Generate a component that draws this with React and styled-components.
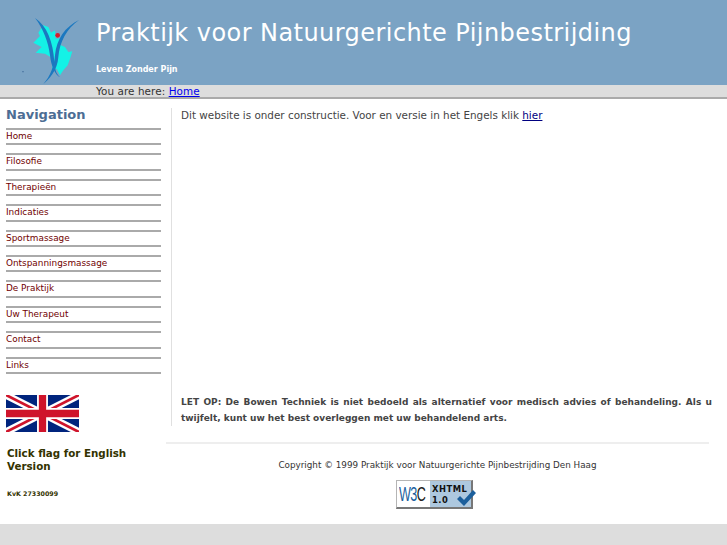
import React from "react";
import styled, { createGlobalStyle } from "styled-components";

const Global = createGlobalStyle`
  html, body { margin: 0; padding: 0; background: #dddddd; }
  body { font-family: "DejaVu Sans", sans-serif; }
`;
const Page = styled.div`width: 727px; height: 545px; display: flex; flex-direction: column; overflow: hidden;`;
const Header = styled.header`height: 85px; background: #7ba3c4; display: flex; flex: none;`;
const LogoBox = styled.div`width: 96px; flex: none; padding: 12px 0 0 15px; box-sizing: border-box;`;
const HeaderText = styled.div`color: #fff; display: flex; flex-direction: column;`;
const Title = styled.h1`margin: 17px 0 0; font-size: 24px; font-weight: 400; line-height: 32px; white-space: nowrap; letter-spacing: 0.44px;`;
const Slogan = styled.div`margin-top: 15px; font-size: 8px; font-weight: 700; line-height: 12px;`;
const Crumb = styled.div`height: 12px; background: #dddddd; border-bottom: 2px solid #aaaaaa; padding-left: 96px; font-size: 10.4px; line-height: 13px; color: #333; flex: none; white-space: nowrap; letter-spacing: .08px;`;
const CrumbLink = styled.a`color: #0000ee; text-decoration: underline;`;
const Body = styled.main`height: 425px; background: #fff; display: flex; flex: none;`;
const Side = styled.aside`width: 166px; flex: none; box-sizing: border-box; padding-left: 6px;`;
const NavTitle = styled.h2`margin: 7px 0 0; width: 155px; font-size: 13px; line-height: 17px; font-weight: 700; color: #4d6d94;`;
const NavList = styled.ul`list-style: none; margin: 5px 0 0; padding: 0; width: 155px;`;
const NavItem = styled.li`height: 13.4px; border-top: 2px solid #aaaaaa; border-bottom: 2px solid #aaaaaa; margin-bottom: 8px; font-size: 8.9px; line-height: 12.5px; color: #700000; white-space: nowrap;`;
const Flag = styled.svg`display: block; margin-top: 21px; width: 73px; height: 37px;`;
const FlagNote = styled.div`margin-top: 15px; width: 150px; font-size: 10.3px; font-weight: 700; line-height: 13px; color: #333300; padding-left: 1px;`;
const Kvk = styled.div`margin-top: 16px; font-size: 6.3px; font-weight: 700; line-height: 9px; color: #333300; padding-left: 1px;`;
const MainCol = styled.div`flex: 1; display: flex; flex-direction: column; min-width: 0;`;
const Content = styled.section`margin-left: 5px; margin-top: 9px; height: 318px; width: 531px; border-left: 1px solid #e0e0e0; padding-left: 9px; display: flex; flex-direction: column; justify-content: space-between; font-size: 10.4px; color: #444;`;
const Intro = styled.p`margin: 1px 0 0; line-height: 13px; white-space: nowrap;`;
const Notice = styled.p`margin: 0; font-size: 9px; font-weight: 700; line-height: 16px; color: #444; text-align: justify; width: 531px;`;
const HierLink = styled.a`color: #000080; text-decoration: underline;`;
const Rule = styled.hr`border: 0; height: 2px; background: #eeeeee; margin: 16px 0 0; width: 543px;`;
const Copyright = styled.div`margin-top: 15px; width: 543px; text-align: center; font-size: 8.8px; line-height: 12px; color: #333; white-space: nowrap;`;
const BadgeWrap = styled.div`width: 537px; display: flex; justify-content: center; margin-top: 9px;`;
const Badge = styled.div`position: relative; width: 77px; height: 29px; box-sizing: border-box; display: flex; background: #fff; border: 1px solid #b5b5b5; border-right: 2px solid #777; border-bottom: 2px solid #777;`;
const W3 = styled.div`width: 33px; flex: none; overflow: hidden; font: 400 21px/26px "Liberation Sans", sans-serif; color: #1a5f9e; letter-spacing: -1px; padding-left: 2px; box-sizing: border-box; white-space: nowrap;`;
const W3Text = styled.span`display: inline-block; transform: scaleX(.6); transform-origin: left center;`;
const C = styled.span`color: #222;`;
const BadgeRight = styled.div`flex: 1; background: #adc8df; font: 700 8.4px/11px "DejaVu Sans", sans-serif; letter-spacing: .5px; color: #111; padding: 3px 0 0 2px;`;
const Check = styled.svg`position: absolute; right: -5px; top: 8px; width: 20px; height: 18px;`;

const navItems = ["Home", "Filosofie", "Therapieën", "Indicaties", "Sportmassage", "Ontspanningsmassage", "De Praktijk", "Uw Therapeut", "Contact", "Links"];

export default function App() {
  return (
    <Page>
      <Global />
      <Header>
        <LogoBox>
          <svg width="70" height="73" viewBox="0 0 210 219">
            <path d="M85 40 L100 45 L108 62 L120 55 L122 80 L140 78 L138 100 L150 105 L160 120 L172 118 L165 140 L158 160 L145 175 L135 190 L125 170 L110 180 L115 140 L90 125 L62 122 L80 105 L55 92 L75 72 L70 62Z" fill="#14f2e6" />
            <path d="M60 18 C95 40 115 90 118 150 C120 170 122 185 136 196 C120 190 108 160 105 130 C100 90 85 50 60 18Z" fill="#1b78c0" />
            <path d="M192 24 C150 45 125 80 120 130 C118 160 105 195 85 216 C100 205 128 175 130 135 C134 90 155 50 192 24Z" fill="#1b78c0" />
            <circle cx="128" cy="70" r="7" fill="#d81f2a" />
            <circle cx="24" cy="179" r="1.8" fill="#2c5a8c" />
          </svg>
        </LogoBox>
        <HeaderText>
          <Title>Praktijk voor Natuurgerichte Pijnbestrijding</Title>
          <Slogan>Leven Zonder Pijn</Slogan>
        </HeaderText>
      </Header>
      <Crumb>You are here: <CrumbLink href="#">Home</CrumbLink></Crumb>
      <Body>
        <Side>
          <NavTitle>Navigation</NavTitle>
          <NavList>
            {navItems.map((n) => <NavItem key={n}>{n}</NavItem>)}
          </NavList>
          <Flag viewBox="0 0 60 30" preserveAspectRatio="none">
            <rect width="60" height="30" fill="#00247d" />
            <path d="M0 0 L60 30 M60 0 L0 30" stroke="#fff" strokeWidth="6" />
            <path d="M0 0 L60 30 M60 0 L0 30" stroke="#cf142b" strokeWidth="2.2" />
            <path d="M30 0 V30 M0 15 H60" stroke="#fff" strokeWidth="9" />
            <path d="M30 0 V30 M0 15 H60" stroke="#cf142b" strokeWidth="6" />
          </Flag>
          <FlagNote>Click flag for English Version</FlagNote>
          <Kvk>KvK 27330099</Kvk>
        </Side>
        <MainCol>
          <Content>
            <Intro>Dit website is onder constructie. Voor en versie in het Engels klik <HierLink href="#">hier</HierLink></Intro>
            <Notice>LET OP: De Bowen Techniek is niet bedoeld als alternatief voor medisch advies of behandeling. Als u twijfelt, kunt uw het best overleggen met uw behandelend arts.</Notice>
          </Content>
          <Rule />
          <Copyright>Copyright © 1999 Praktijk voor Natuurgerichte Pijnbestrijding Den Haag</Copyright>
          <BadgeWrap>
            <Badge>
              <W3><W3Text>W3<C>C</C></W3Text></W3>
              <BadgeRight>XHTML<br />1.0</BadgeRight>
              <Check viewBox="0 0 20 18"><path d="M1 10 L4 7 L8 11 L17 1 L20 4 L8 17Z" fill="#1c5f9c" /></Check>
            </Badge>
          </BadgeWrap>
        </MainCol>
      </Body>
    </Page>
  );
}
